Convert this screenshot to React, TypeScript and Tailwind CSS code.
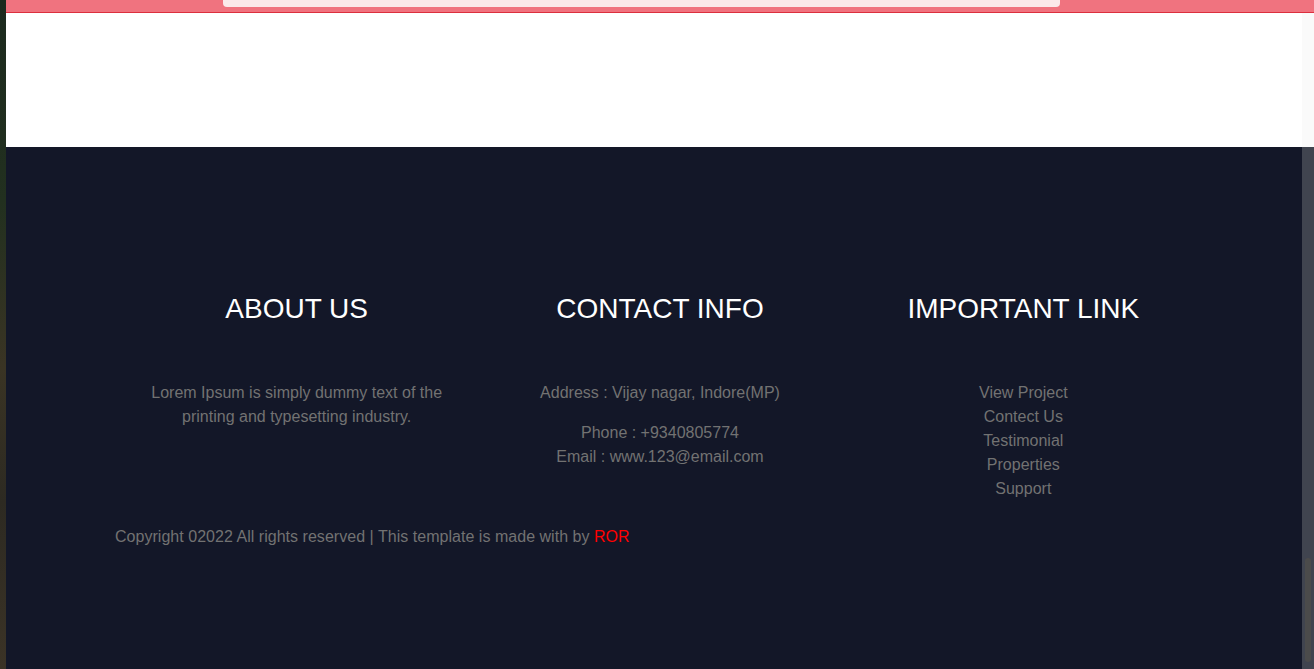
import React from "react";

export default function App() {
  return (
    <div
      className="flex h-[669px] w-[1314px] overflow-hidden"
      style={{ fontFamily: '"Liberation Sans", Arial, sans-serif' }}
    >
      {/* desktop wallpaper strip */}
      <div className="w-[6px] shrink-0 bg-[linear-gradient(180deg,#1c2a1e_0%,#22301f_30%,#3a3424_55%,#2d2a22_75%,#3b3326_100%)]" />

      <div className="flex min-w-0 flex-1 flex-col">
        {/* top pink nav bar */}
        <div className="h-[13px] shrink-0 border-b border-[#dc2f3e] bg-[#f0737f]">
          <div className="ml-[217px] h-[7px] w-[837px] rounded-b-[4px] bg-[#fbe9ea]" />
        </div>

        {/* white area */}
        <div className="flex h-[134px] shrink-0">
          <div className="flex-1 bg-white" />
          <div className="w-[12px] bg-[#fafafa]" />
        </div>

        {/* footer */}
        <div className="flex flex-1">
          <div className="flex-1 bg-[#131728] pl-[109px] pt-[146px]">
            <div className="grid w-[1090px] grid-cols-3 text-center">
              <div className="px-3">
                <h2 className="text-[28px] leading-[32px] text-white">ABOUT US</h2>
                <p className="mt-[56px] text-[16px] leading-[24px] text-[#727272]">
                  Lorem Ipsum is simply dummy text of the printing and typesetting industry.
                </p>
              </div>
              <div className="px-3">
                <h2 className="text-[28px] leading-[32px] text-white">CONTACT INFO</h2>
                <p className="mt-[56px] text-[16px] leading-[24px] text-[#727272]">
                  Address : Vijay nagar, Indore(MP)
                </p>
                <p className="mt-[16px] text-[16px] leading-[24px] text-[#727272]">
                  Phone : +9340805774
                  <br />
                  Email : www.123@email.com
                </p>
              </div>
              <div className="px-3">
                <h2 className="text-[28px] leading-[32px] text-white">IMPORTANT LINK</h2>
                <ul className="mt-[56px] text-[16px] leading-[24px] text-[#727272]">
                  <li>View Project</li>
                  <li>Contect Us</li>
                  <li>Testimonial</li>
                  <li>Properties</li>
                  <li>Support</li>
                </ul>
              </div>
            </div>
            <p className="mt-[24px] text-[16px] leading-[24px] tracking-[0.03px] text-[#727272]">
              Copyright 02022 All rights reserved | This template is made with by{" "}
              <span className="text-[#ff0000]">ROR</span>
            </p>
          </div>
          <div className="relative w-[12px] bg-[#40444f]">
            <div className="absolute left-[3px] top-[411px] h-[104px] w-[6px] rounded-full bg-[#4b4b4b]" />
          </div>
        </div>
      </div>
    </div>
  );
}
